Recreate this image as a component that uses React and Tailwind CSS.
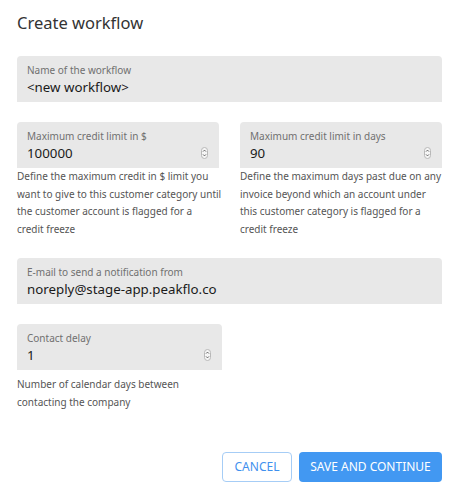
import React from "react";

const Spinner = () => (
  <svg width="7" height="12" viewBox="0 0 7 12" className="shrink-0 mr-[1px]">
    <rect x="0.5" y="0.5" width="6" height="11" rx="3" fill="#f6f6f6" stroke="#b8b8b8" />
    <path d="M2 4.6 L3.5 3.1 L5 4.6" fill="none" stroke="#555" strokeWidth="0.9" />
    <path d="M2 7.4 L3.5 8.9 L5 7.4" fill="none" stroke="#555" strokeWidth="0.9" />
  </svg>
);

const Field = ({ label, value, spinner }) => (
  <div className="h-[46px] bg-[#e8e8e8] rounded-t-[4px] pl-[10px] pr-[10px] pt-[7px]">
    <div className="text-[10px] leading-[14px] text-[#707070]">{label}</div>
    <div className="flex items-center justify-between">
      <span className="text-[13.3px] leading-[20px] text-[#1a1a1a]">{value}</span>
      {spinner && <Spinner />}
    </div>
  </div>
);

const Help = ({ lines, className = "" }) => (
  <p className={"whitespace-nowrap text-[10px] leading-[17.5px] text-[#555] " + className}>
    {lines.map((l, i) => (
      <React.Fragment key={i}>
        {l}
        {i < lines.length - 1 && <br />}
      </React.Fragment>
    ))}
  </p>
);

export default function App() {
  return (
    <div className="w-[460px] h-[498px] bg-white px-[17px] pt-[11px] font-['Noto_Sans',sans-serif]">
      <h1 className="text-[16.5px] leading-[24px] text-[#333]">Create workflow</h1>

      <div className="mt-[21px] w-[425px]">
        <Field label="Name of the workflow" value="<new workflow>" />
      </div>

      <div className="mt-[20px] grid grid-cols-[202px_202px] gap-x-[21px]">
        <div>
          <Field label="Maximum credit limit in $" value="100000" spinner />
          <Help
            lines={[
              "Define the maximum credit in $ limit you",
              "want to give to this customer category until",
              "the customer account is flagged for a",
              "credit freeze",
            ]}
          />
        </div>
        <div>
          <Field label="Maximum credit limit in days" value="90" spinner />
          <Help
            lines={[
              "Define the maximum days past due on any",
              "invoice beyond which an account under",
              "this customer category is flagged for a",
              "credit freeze",
            ]}
          />
        </div>
      </div>

      <div className="mt-[20px] w-[425px]">
        <Field label="E-mail to send a notification from" value="noreply@stage-app.peakflo.co" />
      </div>

      <div className="mt-[20px] w-[205px]">
        <Field label="Contact delay" value="1" spinner />
        <Help className="mt-[6px]" lines={["Number of calendar days between", "contacting the company"]} />
      </div>

      <div className="mt-[41px] flex justify-end gap-[7px] w-[425px]">
        <button className="h-[30px] w-[70px] rounded-[4px] border border-[#a6cdf6] bg-white text-[12px] text-[#3f90ee]">
          CANCEL
        </button>
        <button className="h-[30px] w-[143px] rounded-[4px] bg-[#4298f2] text-[12px] text-white">
          SAVE AND CONTINUE
        </button>
      </div>
    </div>
  );
}
